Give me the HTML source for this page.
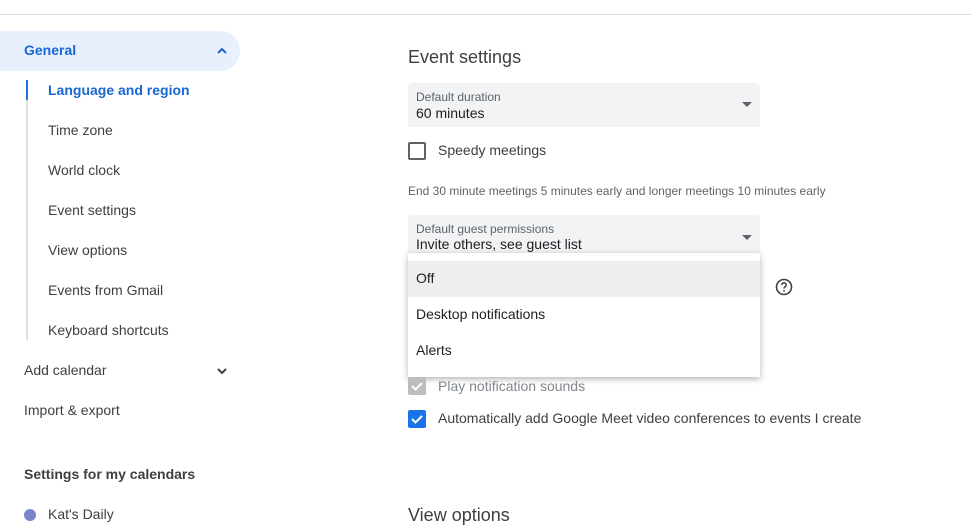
<!DOCTYPE html>
<html><head><meta charset="utf-8"><style>
*{margin:0;padding:0;box-sizing:border-box}
body{width:972px;height:531px;overflow:hidden;background:#fff;font-family:"Liberation Sans",Arial,sans-serif;color:#3c4043;position:relative}
.a{position:absolute;white-space:nowrap}
.nav{font-size:14px}
.sel{background:#f1f3f4;border-radius:4px 4px 0 0}
.lab{font-size:12px;color:#5f6368}
.val{font-size:14px;color:#202124}
.tri{width:0;height:0;border-left:5px solid transparent;border-right:5px solid transparent;border-top:5px solid #5f6368}
.cb{width:18px;height:18px;border-radius:2px}
</style></head><body>
<div class="a" style="left:0;top:14px;width:972px;height:1px;background:#dadce0"></div>
<div class="a" style="left:0;top:31px;width:240px;height:40px;background:#e8f0fe;border-radius:0 20px 20px 0"></div>
<div class="a nav" style="left:24px;top:42px;color:#1967d2;font-weight:bold">General</div>
<svg class="a" style="left:214px;top:44px" width="16" height="14" viewBox="0 0 16 14"><path d="M4 9l4-4 4 4" stroke="#1967d2" stroke-width="2" fill="none"/></svg>
<div class="a" style="left:26px;top:80px;width:2px;height:260px;background:#e0e0e0"></div>
<div class="a" style="left:26px;top:80px;width:2px;height:20px;background:#1a73e8"></div>
<div class="a nav" style="left:48px;top:82px;color:#1967d2;font-weight:bold">Language and region</div>
<div class="a nav" style="left:48px;top:122px">Time zone</div>
<div class="a nav" style="left:48px;top:162px">World clock</div>
<div class="a nav" style="left:48px;top:202px">Event settings</div>
<div class="a nav" style="left:48px;top:242px">View options</div>
<div class="a nav" style="left:48px;top:282px">Events from Gmail</div>
<div class="a nav" style="left:48px;top:322px">Keyboard shortcuts</div>
<div class="a nav" style="left:24px;top:362px">Add calendar</div>
<svg class="a" style="left:214px;top:364px" width="16" height="14" viewBox="0 0 16 14"><path d="M4 5l4 4 4-4" stroke="#3c4043" stroke-width="2" fill="none"/></svg>
<div class="a nav" style="left:24px;top:402px">Import &amp; export</div>
<div class="a nav" style="left:24px;top:466px;font-weight:bold">Settings for my calendars</div>
<div class="a" style="left:24px;top:509px;width:12px;height:12px;border-radius:50%;background:#7986cb"></div>
<div class="a nav" style="left:48px;top:506px">Kat's Daily</div>

<div class="a" style="left:408px;top:47px;font-size:18px;color:#3c4043">Event settings</div>
<div class="a sel" style="left:408px;top:83px;width:352px;height:44px"></div>
<div class="a lab" style="left:416px;top:90px">Default duration</div>
<div class="a val" style="left:416px;top:105px">60 minutes</div>
<div class="a tri" style="left:742px;top:102px"></div>
<div class="a cb" style="left:408px;top:142px;border:2px solid #5f6368"></div>
<div class="a nav" style="left:438px;top:142px;color:#3c4043">Speedy meetings</div>
<div class="a" style="left:408px;top:184px;font-size:12px;color:#5f6368">End 30 minute meetings 5 minutes early and longer meetings 10 minutes early</div>
<div class="a sel" style="left:408px;top:215px;width:352px;height:40px"></div>
<div class="a lab" style="left:416px;top:222px">Default guest permissions</div>
<div class="a val" style="left:416px;top:236px">Invite others, see guest list</div>
<div class="a tri" style="left:742px;top:235px"></div>
<svg class="a" style="left:774px;top:277px" width="20" height="20" viewBox="0 0 20 20"><circle cx="10" cy="10" r="7.5" stroke="#3c4043" stroke-width="1.6" fill="none"/><path d="M7.8 8a2.2 2.2 0 1 1 3 2c-.7.3-.8.8-.8 1.6" stroke="#3c4043" stroke-width="1.5" fill="none"/><circle cx="10" cy="13.8" r=".9" fill="#3c4043"/></svg>
<div class="a" style="left:408px;top:253px;width:352px;height:124px;background:#fff;box-shadow:0 2px 6px rgba(0,0,0,.3)"></div>
<div class="a" style="left:408px;top:261px;width:352px;height:36px;background:#eeeeee"></div>
<div class="a val" style="left:416px;top:270px">Off</div>
<div class="a val" style="left:416px;top:306px">Desktop notifications</div>
<div class="a val" style="left:416px;top:342px">Alerts</div>
<div class="a cb" style="left:408px;top:377px;background:#bdbdbd"></div>
<svg class="a" style="left:408px;top:377px" width="18" height="18" viewBox="0 0 18 18"><path d="M4 9l3.5 3.5L14 6" stroke="#fff" stroke-width="2" fill="none"/></svg>
<div class="a nav" style="left:438px;top:378px;color:#80868b">Play notification sounds</div>
<div class="a cb" style="left:408px;top:410px;background:#1a73e8"></div>
<svg class="a" style="left:408px;top:410px" width="18" height="18" viewBox="0 0 18 18"><path d="M4 9l3.5 3.5L14 6" stroke="#fff" stroke-width="2" fill="none"/></svg>
<div class="a nav" style="left:438px;top:410px">Automatically add Google Meet video conferences to events I create</div>
<div class="a" style="left:408px;top:505px;font-size:18px;color:#3c4043">View options</div>
</body></html>
